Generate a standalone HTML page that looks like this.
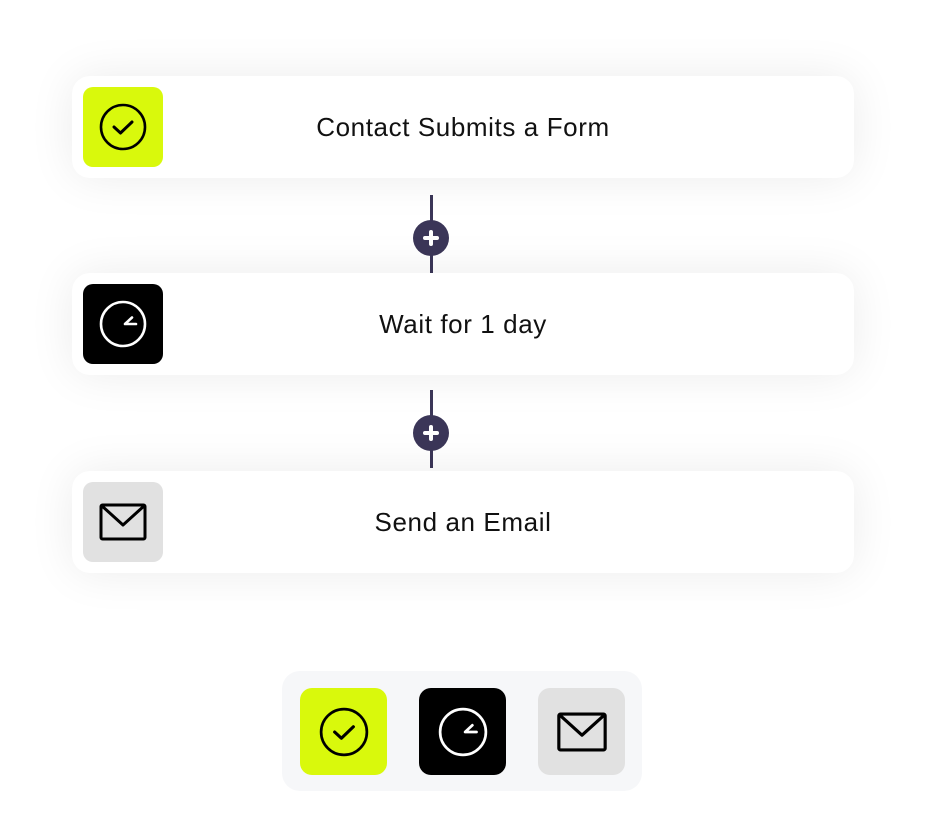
<!DOCTYPE html>
<html><head><style>
body{margin:0;width:934px;height:813px;background:#fff;position:relative;font-family:"Liberation Sans",sans-serif;overflow:hidden}
.card{position:absolute;left:72px;width:782px;height:102px;background:#fff;border-radius:18px;box-shadow:0 0 45px rgba(0,0,0,0.08)}
.card .ic{position:absolute;left:11px;top:11px;width:80px;height:80px;border-radius:10px;display:flex;align-items:center;justify-content:center}
.card .t{position:absolute;left:0;right:0;top:0;line-height:102px;text-align:center;font-size:26px;letter-spacing:0.6px;color:#111}
.line{position:absolute;left:430px;width:3px;background:#3b3658}
.plus{position:absolute;left:413px;width:36px;height:36px;border-radius:50%;background:#3b3658}
.plus:before,.plus:after{content:"";position:absolute;background:#fff;border-radius:2px}
.plus:before{left:10px;top:16px;width:16px;height:4px}
.plus:after{left:16px;top:10px;width:4px;height:16px}
.panel{position:absolute;left:282px;top:671px;width:360px;height:120px;background:#f6f7f9;border-radius:18px}
.b{position:absolute;top:17px;width:87px;height:87px;border-radius:12px;display:flex;align-items:center;justify-content:center}
.g{background:#d9f90c}.k{background:#000}.l{background:#e1e1e1}
</style></head><body>
<div class="line" style="top:195px;height:78px"></div>
<div class="plus" style="top:220px"></div>
<div class="line" style="top:390px;height:78px"></div>
<div class="plus" style="top:415px"></div>

<div class="card" style="top:76px"><div class="ic g"><svg width="50" height="50" viewBox="0 0 50 50"><circle cx="25" cy="25" r="22" fill="none" stroke="#000" stroke-width="2.6"/><path d="M16 25l6.5 6 11.5-11" fill="none" stroke="#000" stroke-width="3" stroke-linecap="round" stroke-linejoin="round"/></svg></div><div class="t">Contact Submits a Form</div></div>
<div class="card" style="top:273px"><div class="ic k"><svg width="50" height="50" viewBox="0 0 50 50"><circle cx="25" cy="25" r="22" fill="none" stroke="#fff" stroke-width="2.6"/><path d="M38 25h-11l7-6.5" fill="none" stroke="#fff" stroke-width="2.6" stroke-linecap="round" stroke-linejoin="round"/></svg></div><div class="t">Wait for 1 day</div></div>
<div class="card" style="top:471px"><div class="ic l"><svg width="48" height="38" viewBox="0 0 48 38"><rect x="2" y="2" width="44" height="34" rx="1.5" fill="none" stroke="#000" stroke-width="3"/><path d="M3 3l21 19 21-19" fill="none" stroke="#000" stroke-width="3" stroke-linejoin="round"/></svg></div><div class="t">Send an Email</div></div>

<div class="panel">
<div class="b g" style="left:18px"><svg width="52" height="52" viewBox="0 0 50 50"><circle cx="25" cy="25" r="22" fill="none" stroke="#000" stroke-width="2.6"/><path d="M16 25l6.5 6 11.5-11" fill="none" stroke="#000" stroke-width="3" stroke-linecap="round" stroke-linejoin="round"/></svg></div>
<div class="b k" style="left:137px"><svg width="52" height="52" viewBox="0 0 50 50"><circle cx="25" cy="25" r="22" fill="none" stroke="#fff" stroke-width="2.6"/><path d="M38 25h-11l7-6.5" fill="none" stroke="#fff" stroke-width="2.6" stroke-linecap="round" stroke-linejoin="round"/></svg></div>
<div class="b l" style="left:256px"><svg width="52" height="40" viewBox="0 0 48 38"><rect x="2" y="2" width="44" height="34" rx="1.5" fill="none" stroke="#000" stroke-width="3"/><path d="M3 3l21 19 21-19" fill="none" stroke="#000" stroke-width="3" stroke-linejoin="round"/></svg></div>
</div>
</body></html>
